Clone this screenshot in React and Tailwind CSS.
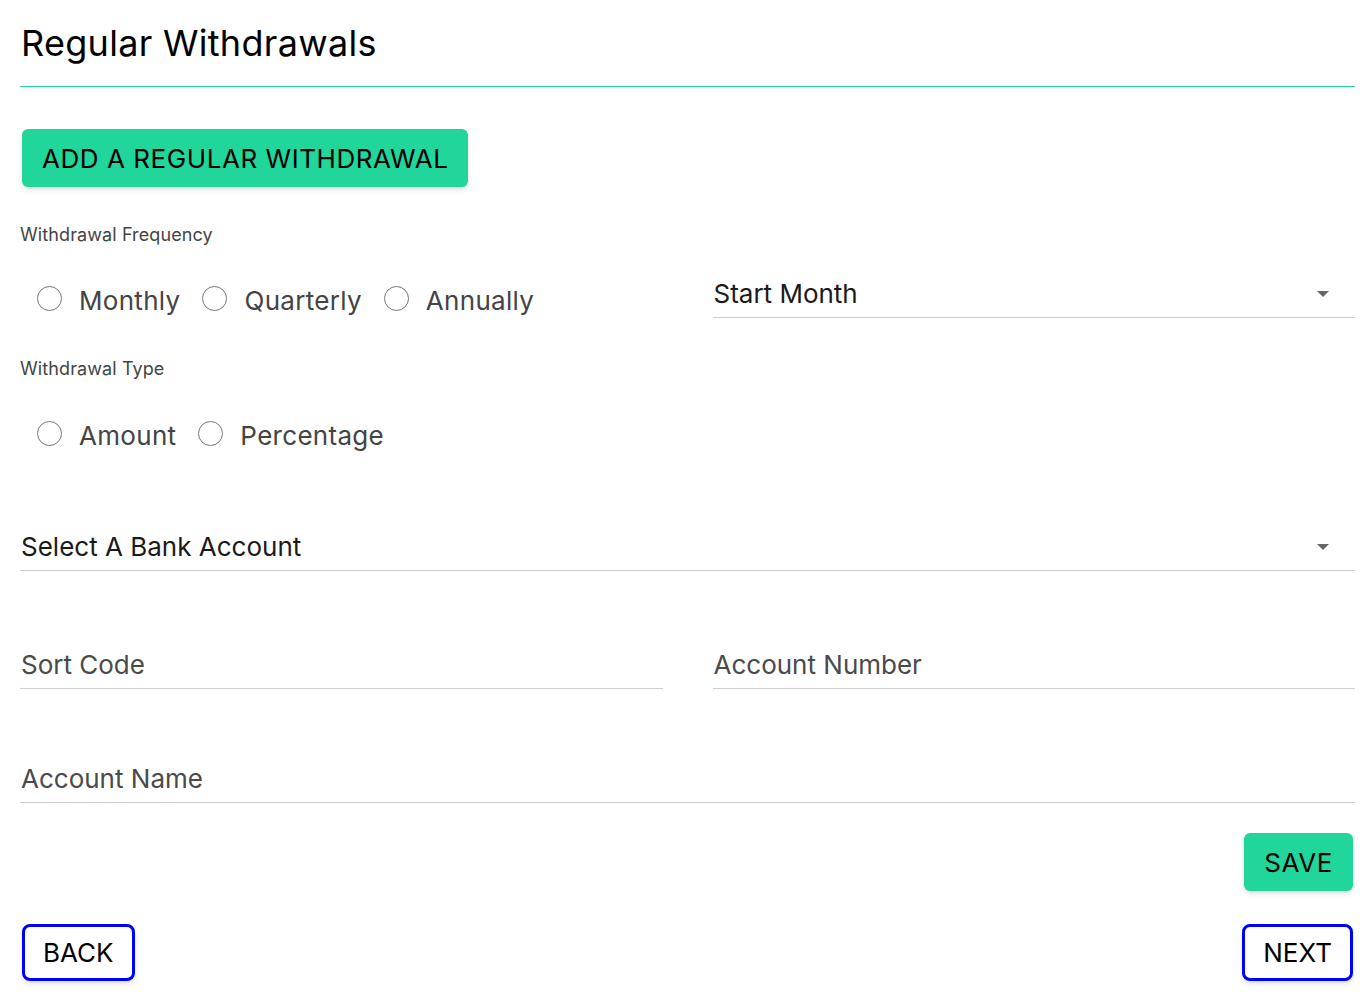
import React from 'react';

const font = "font-['Inter','Liberation_Sans',sans-serif]";

function Radio({ label }) {
  return (
    <label className="flex items-center mr-[22px]">
      <span className="w-[25px] h-[25px] rounded-full border border-[#777] bg-white flex-shrink-0" />
      <span className="ml-[17px] mt-[6px] text-[26px] tracking-[0.3px] text-[#444] leading-none">{label}</span>
    </label>
  );
}

function Caret() {
  return (
    <svg width="12" height="6" viewBox="0 0 12 6" className="mr-[26px]">
      <path d="M0 0h12L6 6z" fill="#666" />
    </svg>
  );
}

function Field({ label, select, dark, className = '' }) {
  return (
    <div className={`h-[48px] flex items-center justify-between border-b border-[#cfcfcf] ${className}`}>
      <span className={`pl-[1px] text-[26px] leading-none ${dark ? 'text-[#1a1a1a]' : 'text-[#4a4a4a]'}`}>{label}</span>
      {select && <Caret />}
    </div>
  );
}

export default function App() {
  return (
    <div className={`${font} bg-white min-h-[1005px] pl-5 pr-[14px]`}>
      {/* Header */}
      <div className="h-[87px] border-b border-[#1fd69a] pt-[21px]">
        <h1 className="text-[36px] tracking-[0.3px] leading-[44px] text-black pl-[1px]">Regular Withdrawals</h1>
      </div>

      <button className="mt-[42px] ml-[2px] h-[58px] px-[20px] rounded-md bg-[#20d69a] text-black text-[26px] tracking-[0.55px] shadow-md">
        ADD A REGULAR WITHDRAWAL
      </button>

      <p className="mt-[36px] text-[18px] tracking-[0.1px] leading-[24px] text-[#444]">Withdrawal Frequency</p>

      <div className="grid grid-cols-2 gap-x-[50px] mt-[26px]">
        <div className="h-[45px] flex items-center pt-[5px] pl-[17px]">
          <Radio label="Monthly" />
          <Radio label="Quarterly" />
          <Radio label="Annually" />
        </div>
        <Field label="Start Month" select dark className="!h-[45px] pb-[3px]" />
      </div>

      <p className="mt-[39px] text-[18px] tracking-[0.1px] leading-[24px] text-[#444]">Withdrawal Type</p>

      <div className="h-[50px] mt-[27px] flex items-center pl-[17px]">
        <Radio label="Amount" />
        <Radio label="Percentage" />
      </div>

      <Field label="Select A Bank Account" select dark className="mt-[65px]" />

      <div className="grid grid-cols-2 gap-x-[50px] mt-[70px]">
        <Field label="Sort Code" />
        <Field label="Account Number" />
      </div>

      <Field label="Account Name" className="mt-[66px]" />

      <div className="flex justify-end mt-[30px] pr-[2px]">
        <button className="h-[58px] px-[20px] rounded-md bg-[#20d69a] text-black text-[26px] tracking-[0.6px] shadow-md">SAVE</button>
      </div>

      <div className="flex justify-between mt-[33px] px-[2px]">
        <button className="h-[57px] px-[18px] rounded-lg border-[3px] border-[#0000ff] bg-white text-black text-[26px] shadow-md">BACK</button>
        <button className="h-[57px] px-[18px] rounded-lg border-[3px] border-[#0000ff] bg-white text-black text-[26px] shadow-md">NEXT</button>
      </div>
    </div>
  );
}
